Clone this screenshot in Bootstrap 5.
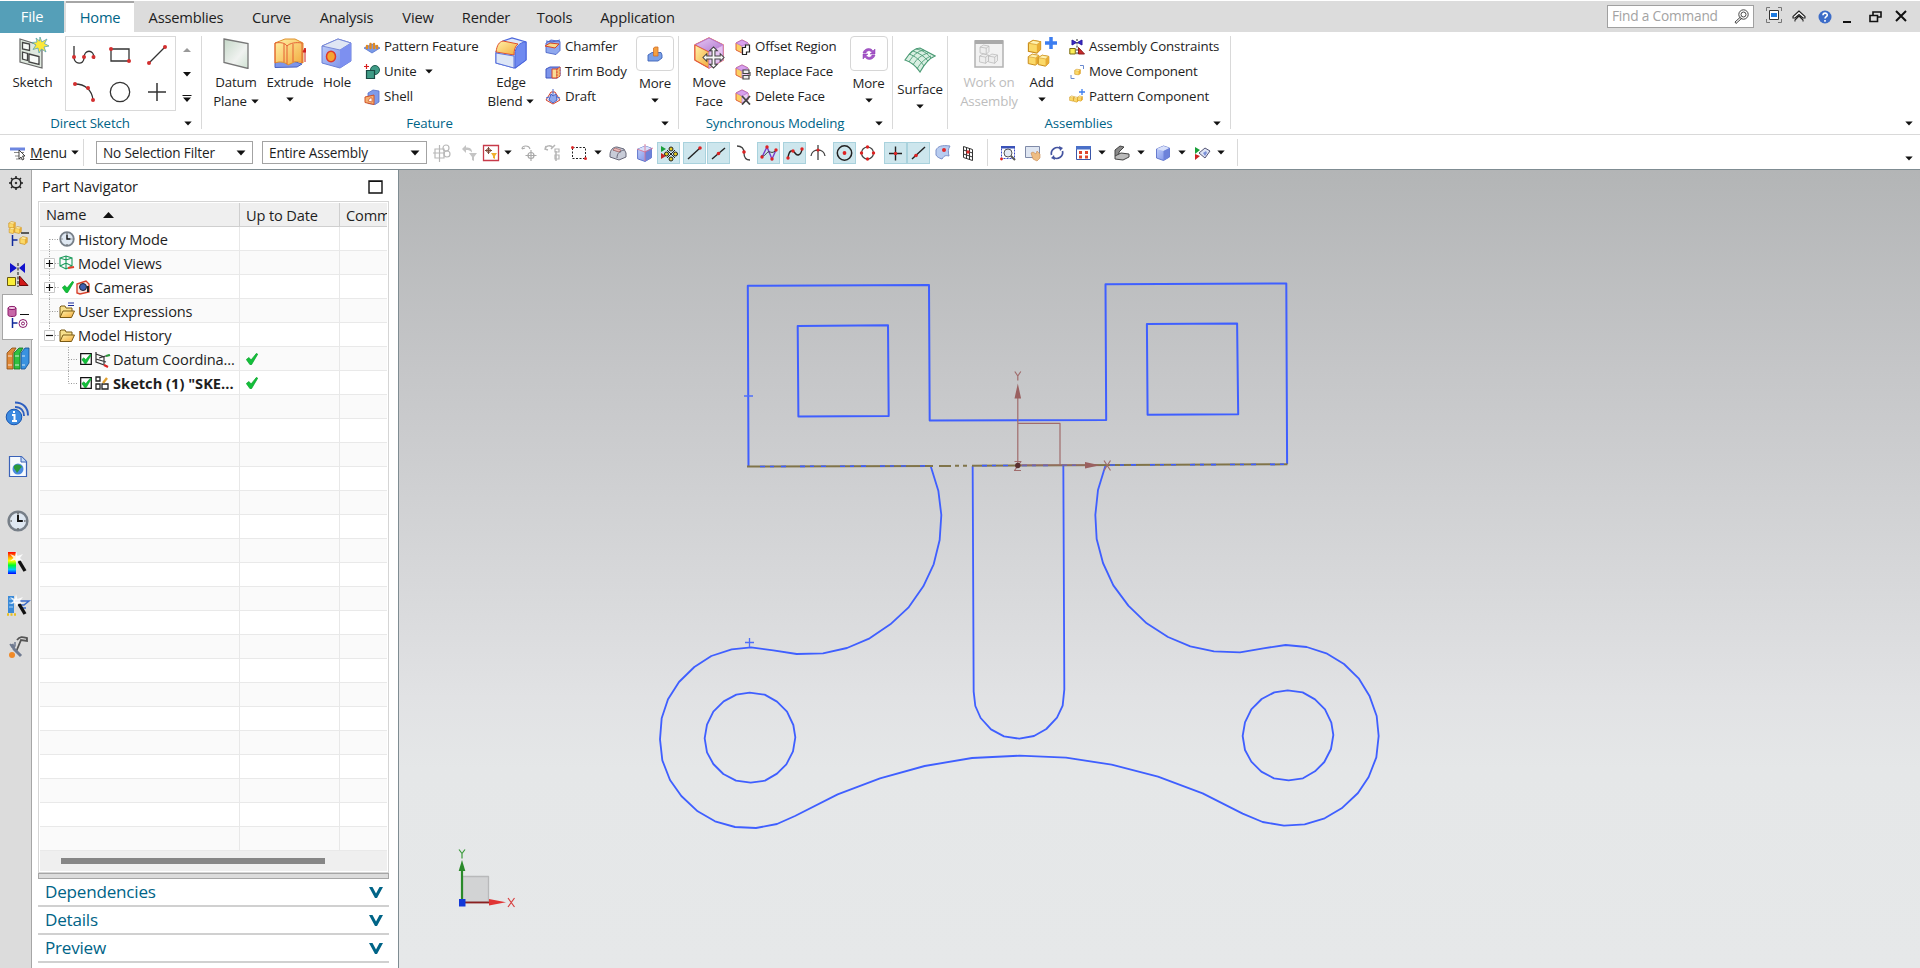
<!DOCTYPE html>
<html lang="en">
<head>
<meta charset="utf-8">
<title>Part Navigator</title>
<link rel="stylesheet" href="https://cdn.jsdelivr.net/npm/bootstrap@5.3.0/dist/css/bootstrap.min.css">
<style>
:root{--teal:#006487;--line:#d9d9d9;--edge:#7f8c92}
body{font-family:"Open Sans","Noto Sans",sans-serif;font-size:13.3px;letter-spacing:-.16px;color:#1e1e1e;height:968px;width:1920px;overflow:hidden;background:#fff;white-space:nowrap}
svg{display:block;flex:none;overflow:visible}
.tabbar{height:31px;margin-top:1px;background:#dcdcdc;font-size:14.7px;letter-spacing:-.2px}
.tabs{display:grid;grid-template-columns:64px 2px 68px 104px 67px 83px 60px 76px 61px 105px;height:31px;line-height:32px;text-align:center}
.tab-file{background:#559fb8;color:#fff;line-height:30px}
.tab-home{background:#fff;color:var(--teal);border-top:2px solid #a6a6a6;line-height:29px}
.find{width:147px;height:23px;border:1px solid #a0a0a0;background:#fff;color:#a3a3a3;font-size:13.7px}
.winbtns{display:grid;grid-template-columns:26px 26px 25px 26px 26px 16px;margin-left:12px;width:154px}
.ribbon{height:103px;border-bottom:1px solid var(--line)}
.grp{height:93px;margin-top:4px;border-right:1px solid var(--line)}
.grp-main{height:80px}
.cap{color:var(--teal);height:14px;line-height:16px}
.g1{width:202px}.g2{width:477px}.g3{width:214px}.g4{width:55px}.g5{width:283px}
.g1 .cap span{width:180px}.g2 .cap span{width:455px}.g3 .cap span{width:192px}.g5 .cap span{width:261px}
.cap span{text-align:center}
.g1 .grp-main{display:grid;grid-template-columns:65px 111px 22px}
.g2 .grp-main{display:grid;grid-template-columns:68px 40px 54px 121px 52px 96px 44px}
.g3 .grp-main{display:grid;grid-template-columns:56px 110px 47px}
.g5 .grp-main{display:grid;grid-template-columns:82px 23px 177px}
.big{display:flex;flex-direction:column;align-items:center;line-height:19px;padding-top:1px}
.big>svg:first-child{margin-bottom:4px}
.big .dn{margin-top:5px}
.smalls{display:grid;grid-auto-rows:25px;margin-top:-2px;align-content:start}
.smalls>div{display:flex;align-items:center;gap:4px}
.gallery{display:grid;grid-template-columns:35px 37px 37px;grid-template-rows:36px 37px;height:75px;border:1px solid var(--line);place-items:center}
.spin{padding-top:12px}
.morebox{width:38px;height:35px;border:1px solid #d6d6d6;border-radius:4px;margin:-1px 0 3px;display:grid;place-items:center}
.off{color:#bdbdbd}
.toolbar{height:35px;border-bottom:1px solid var(--edge)}
.menu{width:84px;border-right:1px solid var(--line);height:27px;margin-top:4px;font-size:14px;padding-left:10px}
.combo{height:23px;border:1px solid #a3a3a3;margin-top:6px;font-size:13.6px;padding:0 6px;line-height:24px}
.c1{width:157px;margin-left:12px}.c2{width:165px;margin-left:9px}
.tools{margin-left:3px;margin-top:4px;height:27px;display:grid;align-items:center;grid-template-columns:27px 22px 25px 13px 24px 26px 27px 12px 26px 25px 26px 24px 25px 25px 26px 23px 27px 23px 28px 23px 24px 25px 31px 9px 24px 25px 26px 27px 12px 27px 14px 27px 12px 27px 20px 1px}
.tools .on{background:#cde6ed;outline:1px solid #a9d2dd;outline-offset:-1px;width:23px;height:22px}
.vsep{width:1px;height:27px;background:var(--line)}
.endarrow{margin-right:7px}
.side{width:32px;background:#dcdcdc;border-right:1px solid #a6a6a6;display:grid;grid-template-rows:46px 42px 31px 54px 53px 54px 55px 41px 43px 41px 24px;padding:5px 0 0 2px;align-items:start;align-content:start;justify-items:center}
.side .cur{background:#fff;width:31px;height:46px;border:1px solid #a6a6a6;border-right:0;justify-self:start;display:grid;place-items:center}
.panel{width:367px;border-right:1px solid var(--edge);font-size:14.6px;letter-spacing:-.14px;padding-left:6px}
.ptitle{height:31px;padding:3px 15px 0 4px}
.tree{width:351px;height:672px;border:1px solid #d5d5d5;padding:1px}
.thead-row{display:grid;grid-template-columns:200px 100px 47px;height:24px;background:#efefef;border-bottom:1px solid #cfcfcf;line-height:25px}
.thead-row>div{padding-left:6px;border-right:1px solid #cfcfcf;overflow:hidden}
.thead-row>div:last-child{border-right:0}
.rows{height:624px;background:linear-gradient(90deg,transparent 199px,#e8e8e8 199px,#e8e8e8 200px,transparent 200px,transparent 299px,#e8e8e8 299px,#e8e8e8 300px,transparent 300px),repeating-linear-gradient(#fff 0 23px,#e9e9e9 23px 24px,#fafafa 24px 47px,#e9e9e9 47px 48px)}
.trow{display:grid;grid-template-columns:206px auto;height:24px;align-items:center;line-height:24px}
.trow>div{display:flex;align-items:center}
.trow span{margin-left:3px}
.cam{margin:0 2px 0 3px}
.kid{margin-left:3px}
.sk{letter-spacing:.02px}
.hscroll{height:20px;background:#efefef;padding:7px 0 0 21px}
.thumb{width:264px;height:6px;background:#868686}
.split{width:351px;height:6px;border:1px solid #a6a6a6;background:#dcdcdc}
.sec{width:351px;height:28px;border-bottom:2px solid #d0d0d0;color:var(--teal);font-size:17.1px;letter-spacing:-.22px;padding:0 6px 0 7px}
.view{background:linear-gradient(#b3b5b6 0,#c5c6c8 25%,#d6d7d9 50%,#e1e2e4 66%,#e5e7e8 75%,#e6e8e9 100%)}
</style>
</head>
<body class="d-flex flex-column">
<svg width="0" height="0" class="position-absolute">
<defs>
<linearGradient id="gy" x1="0" y1="0" x2="1" y2="1"><stop offset="0" stop-color="#fff3a8"/><stop offset="1" stop-color="#f2a93c"/></linearGradient>
<linearGradient id="gb" x1="0" y1="0" x2="1" y2="1"><stop offset="0" stop-color="#c5d3fa"/><stop offset="1" stop-color="#7288e6"/></linearGradient>
<linearGradient id="gp" x1="0" y1="0" x2="1" y2="1"><stop offset="0" stop-color="#e8c8f4"/><stop offset="1" stop-color="#b078d0"/></linearGradient>
<linearGradient id="gg" x1="0" y1="0" x2="1" y2="1"><stop offset="0" stop-color="#c5d8c8"/><stop offset=".6" stop-color="#f0f2f0"/><stop offset="1" stop-color="#cfe2d2"/></linearGradient>
<linearGradient id="rain" x1="0" y1="0" x2="0" y2="1"><stop offset="0" stop-color="#f00"/><stop offset=".25" stop-color="#fa0"/><stop offset=".4" stop-color="#ff0"/><stop offset=".6" stop-color="#0f2"/><stop offset=".8" stop-color="#0cf"/><stop offset="1" stop-color="#00f"/></linearGradient>
<symbol id="dn" viewBox="0 0 8 5"><path d="M.3.5h7.4L4 4.6z" fill="#111"/></symbol>
<symbol id="sketch" viewBox="0 0 32 32"><path d="M3 2l22 7v22L3 25z" fill="#dfe9df" stroke="#666" stroke-width="1.2"/><path d="M5.500 5.500l7 1.500v6.500l-7-1.500zM5.500 15l5 1.500v7l-5-1.500zM12 17l10 2.500v8L12 25z" fill="#f7faf7" stroke="#444" stroke-width="1.300"/><path d="M23 0l1.800 5L30 2l-2.500 4.500L32 9l-5 1 2 5-4.500-3L22 16l-1-5-5 1.500 3-4.500-4-2.500 5-.5-1-4 3.500 3z" fill="#fce83a" stroke="#59a5b5" stroke-width=".8"/></symbol>
<symbol id="datum" viewBox="0 0 32 32"><path d="M4 2l24 4.500v25L4 25.500z" fill="url(#gg)" stroke="#777" stroke-width="1.300"/></symbol>
<symbol id="extr" viewBox="0 0 32 32"><path d="M1 26c6-3 9-1 12 1l6-3 9 3-5 3-22 .5z" fill="#7d95ea" stroke="#4a63c0"/><path d="M1 6l10-4h10l8 4v20c-4-1-6-2-9-1l-6 3c-3-3-8-4-13-2z" fill="url(#gy)" stroke="#e0902c"/><path d="M1 6c6-1 10 0 12 3 3-3 9-4 15-3M13 9v18M10 7v18M19 7v18M1 6v20M28 6v20" fill="none" stroke="#e2542c" stroke-width=".9"/><path d="M31 25V13m-2 2l2-4 2 4z" stroke="#d02020" fill="#d02020"/></symbol>
<symbol id="hole" viewBox="0 0 32 32"><path d="M1 9l16-7 13 4v18l-11 7-18-5z" fill="url(#gb)" stroke="#6b80d8"/><path d="M1 9l18 4 11-7L17 2z" fill="#e0e6f4" stroke="#7a8ad8"/><path d="M19 13v18l11-7V6z" fill="#7d90f0"/><ellipse cx="10" cy="19.500" rx="4.500" ry="5.300" fill="#f5a533" stroke="#e0392b" stroke-width="1.500"/></symbol>
<symbol id="edge" viewBox="0 0 32 32"><path d="M1 15v11l19 5 11-8V5L17 1 8 4z" fill="#dde6f6" stroke="#4b66dc" stroke-width="1.200"/><path d="M20 17v14l11-8V5c-6 0-11 5-11 12z" fill="#6f8af0" stroke="#4b66dc"/><path d="M1 15C2 8 4 5 8 4l15 3c-3 2-4 6-4 11z" fill="url(#gy)" stroke="#e0502c"/><path d="M1 16v10l18 5V19z" fill="#dde6f6" stroke="#5b74dc"/></symbol>
<symbol id="hexf" viewBox="0 0 32 32"><path d="M2 8l14-7 14 7v15l-14 8L2 23z" fill="#fff" stroke="#e45a3a" stroke-width="1.500"/><path d="M2 8l14-7 14 7-14 7z" fill="url(#gp)" stroke="#b878d0"/><path d="M2 8l14 7v16L2 23z" fill="url(#gy)" stroke="#e45a3a"/><path d="M16 15l14-7v15l-14 8z" fill="#e6c4f2" stroke="#c48ada"/></symbol>
<symbol id="arr4" viewBox="0 0 24 24"><path d="M12 1l4 4h-2.500v5.500H19V8l4 4-4 4v-2.500h-5.500V19H16l-4 4-4-4h2.500v-5.500H5V16l-4-4 4-4v2.500h5.500V5H8z" fill="#f6f6f6" stroke="#444" stroke-width="1.100"/></symbol>
<symbol id="surf" viewBox="0 0 32 32"><path d="M1 16C6 8 11 4 16 4l15 8c-5 2-10 7-15 16C12 22 7 18 1 16z" fill="#d9efe2" stroke="#4a9a74" stroke-width="1.200"/><path d="M5 10c6 2 11 6 15 12M9 7c6 2 11 5 15 10M12 5c6 1 11 4 15 9M5 18c4-7 9-11 15-12M9 21c4-7 9-10 15-12M13 25c4-7 9-11 14-13" fill="none" stroke="#4a9a74" stroke-width=".9"/></symbol>
<symbol id="cube" viewBox="0 0 16 16"><path d="M1.500 4l7-3 6 2v9l-6 3.500-7-2.500z" fill="url(#gb)" stroke="#5a70c8" stroke-width=".9"/><path d="M1.500 4l7 2 6-3-6-2z" fill="#d8e0fa"/><path d="M8.500 6v9.500l6-3.500V3z" fill="#6d82da"/></symbol>
<symbol id="ycube" viewBox="0 0 16 16"><path d="M1.500 4.500l5-3 8 1.500v8l-4 4-9-2z" fill="#fbd968" stroke="#c88a18" stroke-width="1.200"/><path d="M1.500 4.500l5-3 8 1.500-4 3z" fill="#fff2b0" stroke="#d49a28" stroke-width=".8"/><path d="M10.500 6v9l4-4V3z" fill="#e8ac34"/></symbol>
<symbol id="wcube" viewBox="0 0 16 16"><path d="M1.500 4.500l5-3 8 1.500v8l-4 4-9-2z" fill="#eee" stroke="#b5b5b5"/><path d="M1.500 4.500l9 1.500 4-3M10.500 6v9" fill="none" stroke="#b5b5b5"/></symbol>
<symbol id="work" viewBox="0 0 32 32"><path d="M2 4h28v26H2z" fill="#f2f2f2" stroke="#b2b2b2" stroke-width="1.500"/><path d="M2 3h28v4H2z" fill="#aaa"/><use href="#wcube" x="5" y="7" width="13" height="11"/><use href="#wcube" x="5" y="16" width="12" height="11"/><use href="#wcube" x="14" y="16" width="12" height="11"/></symbol>
<symbol id="add" viewBox="0 0 32 32"><use href="#ycube" x="1" y="2" width="15" height="15"/><use href="#ycube" x="1" y="16" width="13" height="13"/><use href="#ycube" x="11" y="17" width="13" height="13"/><path d="M25 0v12m-6-6h12" stroke="#3c7df0" stroke-width="3.500"/></symbol>
<symbol id="patf" viewBox="0 0 16 16"><path d="M0 9l8-4 8 4-8 5z" fill="#7a9ae8" stroke="#4a6ac8" stroke-width=".7"/><path d="M3 7v2M6.500 5v4M10 5v4M13 7v2" stroke="#e08a22" stroke-width="2.400" stroke-linecap="round"/></symbol>
<symbol id="unite" viewBox="0 0 16 16"><circle cx="11" cy="6" r="4.500" fill="#3f9b86" stroke="#1f5c50"/><path d="M2.500 6.500h8v8h-8z" fill="#3f9b86" stroke="#1a4a44" stroke-width="1.200"/><path d="M2.500 0v5M0 2.500h5" stroke="#d81e1e" stroke-width="1.200"/></symbol>
<symbol id="shell" viewBox="0 0 16 16"><path d="M4 4l5-3 6 1v11l-4 2.500-7-1z" fill="#7f9bea" stroke="#5870c8" stroke-width=".8"/><path d="M1 8l9-2v9.500l-9-2z" fill="#f5b070" stroke="#d0522a"/><path d="M4 12l2-3h2v4z" fill="#fff" stroke="#d0522a" stroke-width=".7"/></symbol>
<symbol id="cham" viewBox="0 0 16 16"><path d="M1 4l5-3 9 1.500v9l-4 4-10-2z" fill="#8fa8ee" stroke="#4a64c8" stroke-width=".9"/><path d="M0 7l5-3 9 1-4 4z" fill="#f7d98a" stroke="#d8452a"/><path d="M1 2l6 1 8-2" stroke="#4a64c8" fill="none"/></symbol>
<symbol id="trim" viewBox="0 0 16 16"><path d="M1 5l4-2h10v9l-3 2H1z" fill="#7c94ea" stroke="#4056c0"/><path d="M7 5h5v9H7z" fill="#f8dc98" stroke="#d8452a"/><path d="M12 5l3-2v9l-3 2z" fill="#f4c070" stroke="#d8452a" stroke-dasharray="2 1"/></symbol>
<symbol id="draft" viewBox="0 0 16 16"><path d="M6 3h4l5 8-7 4-7-4z" fill="#dfe5fa" stroke="#d8452a"/><path d="M6 5l2 2 3-2 1 6-4 3-4-3z" fill="#8fa8ee" stroke="#4a64c8"/><path d="M8 0v6M1 9l3-1m11 1l-3-1" stroke="#4a64c8"/></symbol>
<symbol id="more1" viewBox="0 0 16 16"><path d="M1 9l4-2.500h9L15 9v3l-4 3H1z" fill="#7ba0e6" stroke="#3c62b8" stroke-width=".9"/><path d="M6.500 2l1.500-1h3v9H6.500z" fill="#f5a040" stroke="#d0702a" stroke-width=".8"/></symbol>
<symbol id="more2" viewBox="0 0 16 16"><path d="M2 7c1-5 8-6 10-2l2-2v5H9l2-1.500C9 4 6 4 5 7zM14 9c-1 5-8 6-10 2l-2 2V8h5L5 9.500C7 12 10 12 11 9z" fill="#a556c8" stroke="#8a3ab0" stroke-width=".5"/></symbol>
<symbol id="mini" viewBox="0 0 16 16"><path d="M1 4l6-3 6 3v7l-6 3-6-3z" fill="#fbd062" stroke="#e0603a"/><path d="M1 4l6-3 6 3-6 3z" fill="#d8a0ec" stroke="#b070d0" stroke-width=".8"/><path d="M7 7l6-3v7l-6 3z" fill="#ead0f4" stroke="#c080d8" stroke-width=".7"/></symbol>
<symbol id="off" viewBox="0 0 16 16"><use href="#mini"/><path d="M7.500 8.500h3V6h4v7h-3v2.500h-4z" fill="#fff" stroke="#222" stroke-width="1.200"/></symbol>
<symbol id="rep" viewBox="0 0 16 16"><use href="#mini"/><path d="M8 6h6v3.500H8zM8 11.500h6V15H8z" fill="#eee" stroke="#444" stroke-width="1.200"/><path d="M15 8v4" stroke="#333"/></symbol>
<symbol id="del" viewBox="0 0 16 16"><use href="#mini"/><path d="M7 7l8 8.500m0-8.500l-8 8.500" stroke="#444" stroke-width="1.800"/></symbol>
<symbol id="cons" viewBox="0 0 16 16"><path d="M3 1l4.500 2.500L3 6zM13 1L8.500 3.500 13 6z" fill="#3a2ac8" stroke="#2a1aa0"/><path d="M8 0v16" stroke="#222" stroke-dasharray="2 1.300"/><path d="M.8 9.500h5.500V15H.8z" fill="#fbee58" stroke="#7a6a10"/><path d="M9.500 8.500V15h6z" fill="#cc2a2a" stroke="#8a1a1a"/></symbol>
<symbol id="movc" viewBox="0 0 16 16"><use href="#ycube" x="5" y="4.500" width="7" height="7"/><path d="M11 1.500h3.500V5M2 11v3.500h3.500" fill="none" stroke="#6a8ad0"/></symbol>
<symbol id="patc" viewBox="0 0 16 16"><use href="#ycube" x="0" y="6" width="6" height="7"/><use href="#ycube" x="4" y="7" width="6" height="7"/><use href="#ycube" x="8" y="6" width="6" height="7"/><path d="M13 0v6m-3-3h6" stroke="#3c7df0" stroke-width="1.300"/></symbol>
<symbol id="fold" viewBox="0 0 16 16"><path d="M1 14V4l1-1h4l1 2h6v3" fill="#f7e08c" stroke="#7a5a14"/><path d="M1 14.500L4 8h11.500l-3 6.500z" fill="url(#gy)" stroke="#7a5a14"/></symbol>
<symbol id="clk" viewBox="0 0 16 16"><circle cx="8" cy="8" r="6.800" fill="#dfe8f2" stroke="#777f88" stroke-width="1.800"/><path d="M8 3.500V8h3.500" fill="none" stroke="#111" stroke-width="1.400"/><path d="M8 2v1M8 13v1M2.500 8h1M12.500 8h1" stroke="#555"/></symbol>
<symbol id="tick" viewBox="0 0 12 12"><path d="M.3 6.500L3 4.500l2 2.500L10.500.3l1.200.9L5.500 11.700H4z" fill="#12c03a" stroke="#0aa02a" stroke-width=".7"/></symbol>
<symbol id="box" viewBox="0 0 12 12"><path d="M.7.700h10.600v10.600H.7z" fill="#fff" stroke="#111" stroke-width="1.200"/><use href="#tick" x="1.500" y="1" width="10" height="10"/></symbol>
<symbol id="wand" viewBox="0 0 24 24"><path d="M13 10l6 10" stroke="#111" stroke-width="3.400"/><path d="M10 0l1.500 5L17 3l-3 4 3 3-5-1-1 4-2-4-5 1 3.500-3L4 3l5 2z" fill="#fff" opacity=".85"/></symbol>
</defs></svg>

<header class="tabbar d-flex">
<nav class="tabs"><div class="tab-file">File</div><i></i><div class="tab-home">Home</div><div>Assemblies</div><div>Curve</div><div>Analysis</div><div>View</div><div>Render</div><div>Tools</div><div>Application</div></nav>
<div class="find d-flex justify-content-between align-items-center ms-auto mt-1 ps-1 pe-1"><span>Find a Command</span>
<svg width="15" height="15" fill="none" stroke="#444"><circle cx="9.500" cy="5.500" r="4.700"/><circle cx="9.500" cy="5.500" r="2.500"/><path d="M6.500 8L1 13l1 1.500 6-5.500"/></svg></div>
<div class="winbtns align-items-center">
<svg width="16" height="16" class="mb-1"><path d="M.5 4V.5H4M12 .5h3.500V4M.5 12v3.500H4M12 15.500h3.500V12" fill="none" stroke="#777"/><path d="M3.500 3.500h9v9h-9z" fill="#fff" stroke="#333"/><path d="M5 6h6v4H5z" fill="#1c7ae0"/></svg>
<svg width="14" height="13" fill="none" stroke="#222" stroke-width="1.100"><path d="M7 1L1 6.500V8h2l4-3.500L11 8h2V6.500zM7 6L3 10v1.500M7 6l4 4v1.500" fill="#fff"/></svg>
<svg width="14" height="14"><circle cx="7" cy="7" r="6.500" fill="#3c6cc8"/><path d="M5 5.300c0-3 4.300-2.800 4.300-.3C9.300 6.700 7 6.500 7 8.500M7 10v1.700" stroke="#fff" stroke-width="1.600" fill="none"/></svg>
<svg width="9" height="14"><path d="M0 12h8" stroke="#111" stroke-width="2"/></svg>
<svg width="13" height="12" fill="none" stroke="#111" stroke-width="1.600"><path d="M4 4V1h8v5H8M1 4.500h7.500v6H1z"/></svg>
<svg width="12" height="12" stroke="#111" stroke-width="2"><path d="M1 0l10 10M11 0L1 10"/></svg>
</div>
</header>

<section class="ribbon d-flex">
<div class="grp g1">
 <div class="grp-main">
  <div class="big"><svg width="32" height="32"><use href="#sketch"/></svg>Sketch</div>
  <div class="gallery">
   <svg width="22" height="20" fill="none" stroke="#333" stroke-width="1.300"><path d="M1 1v11c0 8 10 8 10 1 0-9 10-9 10 0v1"/><g fill="#d32f2f" stroke="none"><circle cx="1" cy="12" r="2"/><circle cx="11" cy="12" r="2"/><circle cx="20.500" cy="12" r="2"/></g></svg>
   <svg width="22" height="18"><path d="M2 3h18v12H2z" fill="none" stroke="#333" stroke-width="1.300"/><circle cx="2" cy="3" r="2" fill="#d32f2f"/><circle cx="20" cy="15" r="2" fill="#d32f2f"/></svg>
   <svg width="20" height="20"><path d="M2 18L18 2" stroke="#333" stroke-width="1.300"/><circle cx="2" cy="18" r="2" fill="#d32f2f"/><circle cx="18" cy="2" r="2" fill="#d32f2f"/></svg>
   <svg width="22" height="20"><path d="M2 2c10 0 17 6 18 16" fill="none" stroke="#333" stroke-width="1.300"/><g fill="#d32f2f"><circle cx="2" cy="2" r="2"/><circle cx="15" cy="6" r="2"/><circle cx="20" cy="18" r="2"/></g></svg>
   <svg width="22" height="22"><circle cx="11" cy="11" r="9.700" fill="none" stroke="#333" stroke-width="1.300"/></svg>
   <svg width="18" height="18"><path d="M9 0v18M0 9h18" stroke="#333" stroke-width="1.500"/></svg>
  </div>
  <div class="spin d-flex flex-column align-items-center">
   <svg width="8" height="58"><path d="M0 4h8L4 0z" fill="#999"/><path d="M0 24h8l-4 4.500zM0 49.500h8l-4 4.500z" fill="#111"/><path d="M-.5 47.500h9" stroke="#111"/></svg>
  </div>
 </div>
 <div class="cap d-flex align-items-center"><span>Direct Sketch</span><svg width="8" height="5" class="ms-1"><use href="#dn"/></svg></div>
</div>

<div class="grp g2">
 <div class="grp-main">
  <div class="big"><svg width="32" height="32"><use href="#datum"/></svg>Datum<div class="d-flex align-items-center gap-1">Plane<svg width="8" height="5"><use href="#dn"/></svg></div></div>
  <div class="big"><svg width="32" height="32"><use href="#extr"/></svg>Extrude<svg width="8" height="5" class="dn"><use href="#dn"/></svg></div>
  <div class="big"><svg width="32" height="32"><use href="#hole"/></svg>Hole</div>
  <div class="smalls"><div><svg width="16" height="16"><use href="#patf"/></svg>Pattern Feature</div><div><svg width="16" height="16"><use href="#unite"/></svg>Unite<svg width="8" height="5" class="ms-1"><use href="#dn"/></svg></div><div><svg width="16" height="16"><use href="#shell"/></svg>Shell</div></div>
  <div class="big"><svg width="32" height="32"><use href="#edge"/></svg>Edge<div class="d-flex align-items-center gap-1">Blend<svg width="8" height="5"><use href="#dn"/></svg></div></div>
  <div class="smalls ps-1 ms-1"><div><svg width="16" height="16"><use href="#cham"/></svg>Chamfer</div><div><svg width="16" height="16"><use href="#trim"/></svg>Trim Body</div><div><svg width="16" height="16"><use href="#draft"/></svg>Draft</div></div>
  <div class="big"><div class="morebox"><svg width="16" height="16"><use href="#more1"/></svg></div>More<svg width="8" height="5" class="dn"><use href="#dn"/></svg></div>
 </div>
 <div class="cap d-flex align-items-center"><span>Feature</span><svg width="8" height="5" class="ms-1"><use href="#dn"/></svg></div>
</div>

<div class="grp g3">
 <div class="grp-main">
  <div class="big ps-1"><svg width="32" height="32"><use href="#hexf"/><use href="#arr4" x="9" y="9" width="23" height="23"/></svg>Move<div>Face</div></div>
  <div class="smalls"><div><svg width="16" height="16"><use href="#off"/></svg>Offset Region</div><div><svg width="16" height="16"><use href="#rep"/></svg>Replace Face</div><div><svg width="16" height="16"><use href="#del"/></svg>Delete Face</div></div>
  <div class="big"><div class="morebox"><svg width="16" height="16"><use href="#more2"/></svg></div>More<svg width="8" height="5" class="dn"><use href="#dn"/></svg></div>
 </div>
 <div class="cap d-flex align-items-center"><span>Synchronous Modeling</span><svg width="8" height="5" class="ms-1"><use href="#dn"/></svg></div>
</div>

<div class="grp g4"><div class="big pt-2"><svg width="32" height="32"><use href="#surf"/></svg>Surface<svg width="8" height="5" class="dn"><use href="#dn"/></svg></div></div>

<div class="grp g5">
 <div class="grp-main">
  <div class="big off"><svg width="32" height="32"><use href="#work"/></svg>Work on<div>Assembly</div></div>
  <div class="big"><svg width="32" height="32"><use href="#add"/></svg>Add<svg width="8" height="5" class="dn"><use href="#dn"/></svg></div>
  <div class="smalls ps-3"><div><svg width="16" height="16"><use href="#cons"/></svg>Assembly Constraints</div><div><svg width="16" height="16"><use href="#movc"/></svg>Move Component</div><div><svg width="16" height="16"><use href="#patc"/></svg>Pattern Component</div></div>
 </div>
 <div class="cap d-flex align-items-center"><span>Assemblies</span><svg width="8" height="5" class="ms-1"><use href="#dn"/></svg></div>
</div>
<svg width="8" height="5" class="endarrow ms-auto align-self-end mb-2"><use href="#dn"/></svg>
</section>

<section class="toolbar d-flex">
<div class="menu d-flex align-items-center"><svg width="16" height="16" class="me-1"><path d="M3 3.500h12M4 7.500h10M5 11h9M6 14h7" stroke="#888"/><path d="M0 2.500h15v3H0z" fill="#6d86e0"/><path d="M9 5v9l2-2 1.500 3 1.500-1-1.500-3H15z" fill="#fff" stroke="#333" stroke-width=".9"/></svg><span><u>M</u>enu</span><svg width="8" height="5" class="ms-1"><use href="#dn"/></svg></div>
<div class="combo c1 d-flex align-items-center justify-content-between">No Selection Filter<svg width="10" height="6"><use href="#dn"/></svg></div>
<div class="combo c2 d-flex align-items-center justify-content-between">Entire Assembly<svg width="10" height="6"><use href="#dn"/></svg></div>
<div class="tools">
<svg width="24" height="24" fill="none" stroke="#b8b8b8" stroke-width="1.200"><path d="M5 8h9v9H5zM9.500 4v17M3 12h12"/><circle cx="16" cy="7" r="3"/><circle cx="17" cy="13" r="3"/></svg>
<svg width="24" height="24" fill="#c4c4c4"><path d="M5 8l4-4v2.500c4 0 6 1 6 5-2-2-3-2.500-6-2.500V12zM12 12h8l-3 4v4l-2-1v-3z"/></svg>
<svg width="24" height="24" fill="none"><path d="M4.500 4.500h15v15h-15z" stroke="#c83a4a" stroke-width="1.300"/><path d="M9.500 6v7M6 9.500h7" stroke="#7a4a3a"/><circle cx="9.500" cy="9.500" r="2" stroke="#7a4a3a"/><path d="M12 12h6l-2 3v3l-2-1v-2z" fill="#f0b030"/></svg>
<svg width="8" height="5"><use href="#dn"/></svg>
<svg width="24" height="24" fill="none" stroke="#aaa" stroke-width="1.200"><path d="M5 8c0-4 7-4 8 0M5 8l3-1M14 9v11M8.500 14.500h11"/><circle cx="14" cy="14.500" r="3"/></svg>
<svg width="24" height="24" fill="none" stroke="#b5b5b5" stroke-width="1.500"><path d="M4 8c1-4 6-4 8-1M5 5l-1 3 3 1M10 8l4-4M15 10v10"/><path d="M14 8h4v3h-4zM14 14h4v4h-4z" stroke-width="1.200"/></svg>
<svg width="24" height="24" fill="none"><path d="M5.500 6.500h13v11h-13z" stroke="#222" stroke-dasharray="2 1.500"/><circle cx="5.500" cy="6.500" r="1.500" fill="#e02a2a"/><circle cx="18.500" cy="17.500" r="1.500" fill="#e02a2a"/></svg>
<svg width="8" height="5"><use href="#dn"/></svg>
<svg width="24" height="24" stroke="#667" stroke-width="1"><path d="M4 14c0-5 3-8 7-8l7 2 2 4v4l-7 3-9-3z" fill="#c8ccd8"/><path d="M11 17c0-5 3-7 7-8M7 9l8 2" fill="none"/><path d="M9 7l6 2-2 2-6-2z" fill="#e8b8b8" stroke="#a66" stroke-width=".7"/></svg>
<svg width="24" height="24"><use href="#cube" x="4" y="4" width="17" height="17"/><path d="M13 3v17M5 8l8 3 8-4" fill="none" stroke="#e0708a" stroke-width=".8"/></svg>
<svg class="on" viewBox="0 0 23 22"><path d="M4 4l5 3-5 3z" fill="#1aa03a"/><path d="M4 11l5 3-5 3z" fill="#c22"/><g fill="#e8cc20" stroke="#222"><circle cx="14" cy="7" r="2"/><circle cx="14" cy="17" r="2"/><circle cx="9.500" cy="12" r="2"/><circle cx="18.500" cy="12" r="2"/></g><path d="M10 8l8 8m0-8l-8 8" stroke="#222"/></svg>
<svg class="on" viewBox="0 0 23 22"><path d="M5 17L17 6" stroke="#222" stroke-width="1.400"/><circle cx="17" cy="6" r="1.800" fill="#d22"/></svg>
<svg class="on" viewBox="0 0 23 22"><path d="M5 17L18 6" stroke="#222" stroke-width="1.400"/><circle cx="11.500" cy="11.500" r="1.800" fill="#d22"/></svg>
<svg width="24" height="24"><path d="M5 5c5 0 7 2 7 7s2 7 6 7" fill="none" stroke="#444" stroke-width="1.300"/><circle cx="12" cy="11" r="1.800" fill="#d22"/></svg>
<svg class="on" viewBox="0 0 23 22" fill="none"><path d="M5 15L10 5l5 12 4-9" stroke="#7a3ac8" stroke-width="1.400"/><path d="M4 14c4 1 5-3 7-4s4 2 7-1" stroke="#333"/><g fill="#d22"><circle cx="5" cy="15" r="1.700"/><circle cx="10" cy="5" r="1.700"/><circle cx="15" cy="17" r="1.700"/><circle cx="19" cy="8" r="1.700"/></g></svg>
<svg class="on" viewBox="0 0 23 22"><path d="M5 16c1-9 5-8 7-5s6 3 7-4" fill="none" stroke="#222" stroke-width="1.400"/><g fill="#d22"><circle cx="5" cy="16" r="1.700"/><circle cx="10" cy="9" r="1.700"/><circle cx="19" cy="7" r="1.700"/></g></svg>
<svg width="24" height="24" fill="none" stroke="#444" stroke-width="1.300"><path d="M12 4v15M5 15c1-8 13-8 14 0"/><circle cx="12" cy="9" r="1.500" fill="#d22" stroke="none"/></svg>
<svg class="on" viewBox="0 0 23 22"><circle cx="11.500" cy="11" r="7.200" fill="none" stroke="#222" stroke-width="1.500"/><circle cx="11.500" cy="11" r="1.900" fill="#d22"/></svg>
<svg width="24" height="24"><circle cx="11.500" cy="12" r="6" fill="none" stroke="#444" stroke-width="1.200"/><g fill="#d22"><circle cx="11.500" cy="6" r="1.700"/><circle cx="11.500" cy="18" r="1.700"/><circle cx="5.500" cy="12" r="1.700"/><circle cx="17.500" cy="12" r="1.700"/></g></svg>
<svg class="on" viewBox="0 0 23 22"><path d="M11.500 4.500v14M5 11.500h13" stroke="#222" stroke-width="1.400"/><circle cx="11.500" cy="11.500" r="1.700" fill="#d22"/></svg>
<svg class="on" viewBox="0 0 23 22"><path d="M5 17L18 5" stroke="#222" stroke-width="1.400"/><circle cx="9" cy="13.500" r="1.800" fill="#d22"/></svg>
<svg width="24" height="24"><path d="M5 9c2-4 6-5 14-4-2 3-2 6-1 10-4-1-5 0-7 3-3-1-5-2-6-4z" fill="#b8ccf0" stroke="#7a90c8"/><circle cx="13" cy="9" r="2" fill="#e02a2a"/></svg>
<svg width="24" height="24" fill="none" stroke="#333"><path d="M7.500 5.500l9 3v11l-9-3zM10.500 6.500v11M13.500 7.500v11M7.500 9l9 3M7.500 13l9 3"/><circle cx="12" cy="11" r="1.700" fill="#e02a2a" stroke="none"/></svg>
<i class="vsep"></i>
<svg width="24" height="24" fill="none"><path d="M5.500 6.500h13v11h-13z" stroke="#3a4ac8" stroke-dasharray="2 1"/><path d="M5 5h14v2.500H5z" fill="#3a52b8"/><circle cx="12" cy="12" r="4" fill="#e4eaf4" stroke="#555"/><path d="M15 15l4 4" stroke="#555" stroke-width="2"/><circle cx="5.500" cy="18" r="1.400" fill="#d22"/></svg>
<svg width="24" height="24"><path d="M5.500 5.500h14v11h-14z" fill="#dfe6f2" stroke="#7f8aa8"/><path d="M11 12l2-1 3 2 1-3 3 3v4l-3 3-4-2z" fill="#eebd84" stroke="#c88a50" stroke-width=".6"/></svg>
<svg width="24" height="24" fill="none" stroke="#4454a0" stroke-width="1.700"><path d="M6.500 14a6 6 0 0 1 9-6.500M17.500 10a6 6 0 0 1-9 6.500"/><path d="M14 5l4 2-3 3zM10 19l-4-2 3-3z" fill="#4454a0" stroke="none"/></svg>
<svg width="24" height="24"><path d="M5.500 5.500h14v13h-14z" fill="#fff" stroke="#3a56a8"/><path d="M5 5h15v3.500H5z" fill="#4a70c8"/><path d="M8 10h3v3H8zM14 10h3v3h-3zM8 14.500h3v3H8zM14 14.500h3v3h-3z" fill="#e0452a"/></svg>
<svg width="8" height="5"><use href="#dn"/></svg>
<svg width="24" height="24" stroke="#444"><path d="M5 15V9l5-4 4 1-5 5v5z" fill="#888"/><path d="M5 15l6-3 8 1v3l-6 3-8-1z" fill="#bbb"/></svg>
<svg width="8" height="5"><use href="#dn"/></svg>
<svg width="24" height="24"><use href="#cube" x="4" y="4" width="16" height="16"/></svg>
<svg width="8" height="5"><use href="#dn"/></svg>
<svg width="24" height="24"><path d="M5 6l5 3-5 4z" fill="#1aa03a"/><path d="M5 13l5 2-5 4z" fill="#c22"/><path d="M9 12l6-5 5 3-5 7z" fill="#dde4f5" stroke="#557"/><path d="M13 12l3-2 1 2-2 3z" fill="#7a90d8"/></svg>
<svg width="8" height="5"><use href="#dn"/></svg>
<i class="vsep"></i>
</div>
<svg width="8" height="5" class="endarrow ms-auto align-self-end mb-2"><use href="#dn"/></svg>
</section>

<main class="d-flex flex-grow-1">
<aside class="side">
<svg width="18" height="16" fill="none" stroke="#222"><circle cx="7" cy="8" r="4.800" stroke-width="1.500"/><circle cx="7" cy="8" r=".8" fill="#222"/><path d="M7 1v2M7 13v2M0 8h2M12 8h2M2 3l1.500 1.500M10.500 11.500L12 13M12 3l-1.500 1.500M3.500 11.500L2 13" stroke-width="1.500"/></svg>
<svg width="24" height="24"><use href="#ycube" x="2" y="0" width="8" height="8"/><use href="#ycube" x="2" y="6" width="8" height="7"/><use href="#ycube" x="8" y="5" width="8" height="8"/><path d="M6.500 14v11M6.500 19h5" stroke="#112a9a" stroke-width="1.500"/><path d="M15 12h8" stroke="#111" stroke-width="1.300"/><use href="#ycube" x="13" y="15" width="9" height="9"/></svg>
<svg width="24" height="24"><path d="M4 0l7 5-7 5zM19 0l-6 5 6 5z" fill="#1212cc"/><path d="M12 0v24" stroke="#111" stroke-dasharray="3 1.500"/><path d="M1.500 14.500h8v8h-8z" fill="#fbee38" stroke="#6a5a10"/><path d="M13.500 13v9.500H22z" fill="#d01818" stroke="#6a0a0a"/></svg>
<div class="cur"><svg width="24" height="24"><path d="M2 3v7c0 2 8 2 8 0V3" fill="#c868a8" stroke="#8a1a6a"/><ellipse cx="6" cy="3" rx="4" ry="1.600" fill="#f4c8e4" stroke="#8a1a6a"/><path d="M6.500 13v10M6.500 18h5" stroke="#112a9a" stroke-width="1.500"/><path d="M14 9.500h9" stroke="#111"/><circle cx="17" cy="18.500" r="4" fill="none" stroke="#8a1a6a"/><circle cx="17" cy="18.500" r="1.500" fill="none" stroke="#8a1a6a"/></svg></div>
<svg width="24" height="22" stroke-width=".8"><path d="M1 5l5-5h4L7 5v16H1z" fill="#e08a3a" stroke="#8a4a10"/><path d="M8 5l5-5h4l-3 5v16H8z" fill="#30c040" stroke="#107020"/><path d="M15 5l4-5h4v15l-4 6h-4z" fill="#3a92e0" stroke="#104a90"/><path d="M2 8h4M9 8h4M16 8h3M2 17h4M9 17h4M16 17h3" stroke="#fff"/></svg>
<svg width="24" height="24"><circle cx="8" cy="16" r="7.800" fill="#3c8ae0" stroke="#1a56b0"/><path d="M8 10v2M6 14h2.500v6M6 20h5" stroke="#fff" stroke-width="2" fill="none"/><path d="M9 6c6 0 9 4 9 9M9 1.500c8 0 13 5 13 13" stroke="#2d5fc0" stroke-width="2" fill="none"/></svg>
<svg width="20" height="24"><path d="M1.500 1.500h12l5 5v15h-17z" fill="#f6fafe" stroke="#3a62b8" stroke-width="1.200"/><path d="M13 1.500v5.500h5.500" fill="#c8dcf4" stroke="#3a62b8"/><circle cx="10" cy="14" r="5.500" fill="#4a8ae0"/><path d="M6 11c3-3 7-1 8 1-2 1-3 4-5 6-1-3-4-4-3-7z" fill="#2a9a3a"/></svg>
<svg width="22" height="22"><use href="#clk"/></svg>
<svg width="24" height="24"><path d="M2 1h8v22H2z" fill="url(#rain)"/><use href="#wand"/></svg>
<svg width="24" height="24"><path d="M2 2h6v17H2z" fill="#3a8ad8"/><path d="M3 5h4M3 9h4M3 13h4" stroke="#a8d0f4"/><path d="M9 7h14l-5 4h-6M14 14h6" fill="none" stroke="#3a6ac8" stroke-width="1.400"/><path d="M1 20.500h9" stroke="#e8c020" stroke-width="2.500" stroke-dasharray="2 1.500"/><use href="#wand"/></svg>
<svg width="24" height="24"><path d="M11 5c3-4 6-3 10-2v3l-6-1-5 12" fill="none" stroke="#555" stroke-width="1.800"/><path d="M6 9l2 5 7 7" stroke="#6f7a90" stroke-width="3" fill="none"/><path d="M4 9l2 3 3-1V7" stroke="#6f7a90" stroke-width="1.500" fill="none"/><circle cx="6" cy="20" r="3" fill="#f08a28"/></svg>
</aside>

<aside class="panel">
<div class="ptitle d-flex align-items-center justify-content-between"><span>Part Navigator</span><svg width="15" height="14"><path d="M1 1h13v12H1z" fill="none" stroke="#111" stroke-width="1.400"/><path d="M1 1.500h13" stroke="#111"/></svg></div>
<div class="tree">
<div class="thead-row"><div class="d-flex align-items-center">Name<svg width="12" height="6" class="ms-3"><path d="M1 6h11L6.500 0z" fill="#111"/></svg></div><div>Up to Date</div><div>Comm</div></div>
<div class="rows">
<div class="trow"><div><svg width="19" height="24" fill="none" stroke="#999" stroke-dasharray="1 1.500"><path d="M9.500 12v12M9.500 12.500H18"/></svg><svg width="16" height="16"><use href="#clk"/></svg><span>History Mode</span></div></div>
<div class="trow"><div><svg width="19" height="24" fill="none"><path d="M9.500 0v24M15 12.500h4" stroke="#999" stroke-dasharray="1 1.500"/><path d="M4.500 7.500h10v10h-10z" fill="#fff" stroke="#c8c8c8"/><path d="M9.500 9v7M6 12.500h7" stroke="#111" stroke-width="1.200"/></svg><svg width="16" height="16" fill="none" stroke="#1a9a5a" stroke-width="1.100"><path d="M1 3l6-2 6 2v8l-6 3-6-3zM1 3l6 2 6-2M7 1v13M1 11l6-3 6 3"/><path d="M9 13l6-1" stroke="#e0402a" stroke-width="2"/></svg><span>Model Views</span></div></div>
<div class="trow"><div><svg width="19" height="24" fill="none"><path d="M9.500 0v24M15 12.500h4" stroke="#999" stroke-dasharray="1 1.500"/><path d="M4.500 7.500h10v10h-10z" fill="#fff" stroke="#c8c8c8"/><path d="M9.500 9v7M6 12.500h7" stroke="#111" stroke-width="1.200"/></svg><svg width="12" height="12" class="cam"><use href="#tick"/></svg><svg width="15" height="15"><path d="M1 4l9-3 3 3v8l-9 2-3-1z" fill="#f8e4e0" stroke="#d8402a" stroke-width="1.400"/><circle cx="7" cy="7" r="3.500" fill="#4060b0" stroke="#223"/><path d="M12 6v6" stroke="#222" stroke-width="2"/></svg><span>Cameras</span></div></div>
<div class="trow"><div><svg width="19" height="24" fill="none" stroke="#999" stroke-dasharray="1 1.500"><path d="M9.500 0v24M9.500 12.500H18"/></svg><svg width="16" height="16"><use href="#fold"/><path d="M9 0h6M9 2.500h6" stroke="#1a2a9a" stroke-width="1.200"/></svg><span>User Expressions</span></div></div>
<div class="trow"><div><svg width="19" height="24" fill="none"><path d="M9.500 0v7M15 12.500h4" stroke="#999" stroke-dasharray="1 1.500"/><path d="M4.500 7.500h10v10h-10z" fill="#fff" stroke="#c8c8c8"/><path d="M6 12.500h7" stroke="#111" stroke-width="1.200"/></svg><svg width="16" height="16"><use href="#fold"/></svg><span>Model History</span></div></div>
<div class="trow"><div><svg width="40" height="24" fill="none" stroke="#999" stroke-dasharray="1 1.500"><path d="M28.500 0v24M28.500 12.500H38"/></svg><svg width="12" height="12"><use href="#box"/></svg><svg width="15" height="16" class="kid" fill="none" stroke="#333"><path d="M1 1v10l11 4M1 3l8 3v7M4 7l10-3M1 8l10 3" stroke-width="1.200"/><path d="M11 5l4-1" stroke="#2a9a3a" stroke-width="2"/><path d="M9 14l4 2" stroke="#d22" stroke-width="2"/></svg><span>Datum Coordina...</span></div><svg width="12" height="12"><use href="#tick"/></svg></div>
<div class="trow"><div><svg width="40" height="24" fill="none" stroke="#999" stroke-dasharray="1 1.500"><path d="M28.500 0v12M28.500 12.500H38"/></svg><svg width="12" height="12"><use href="#box"/></svg><svg width="15" height="14" class="kid" fill="none" stroke="#222" stroke-width="1.300"><path d="M1 1h4v4H1zM1 8h4v5H1zM7 8h6v5H7z"/><path d="M8 7l4-5" stroke="#e0a030" stroke-width="2.400"/></svg><span class="fw-bold sk">Sketch (1) "SKE...</span></div><svg width="12" height="12"><use href="#tick"/></svg></div>
</div>
<div class="hscroll"><div class="thumb"></div></div>
</div>
<div class="split"></div>
<div class="sec d-flex align-items-center justify-content-between"><span>Dependencies</span><svg width="14" height="11"><path d="M0 0h3.500L7 6.500 10.500 0H14L8 11H6z" fill="#006487"/></svg></div>
<div class="sec d-flex align-items-center justify-content-between"><span>Details</span><svg width="14" height="11"><path d="M0 0h3.500L7 6.500 10.500 0H14L8 11H6z" fill="#006487"/></svg></div>
<div class="sec d-flex align-items-center justify-content-between"><span>Preview</span><svg width="14" height="11"><path d="M0 0h3.500L7 6.500 10.500 0H14L8 11H6z" fill="#006487"/></svg></div>
</aside>

<section class="view flex-grow-1">
<svg width="1521" height="798" viewBox="399 170 1521 798" fill="none" stroke="#3f5fff" stroke-width="2" stroke-linejoin="round">
<path d="M748.500 466.500L747.800 285.700 929 285l.7 135.600 176.500-.7-.7-135.600 180.800-.8.8 180.500"/>
<path d="M797.700 326l90.300-.7.700 90.700-90.300.4zM1146.900 324l90.200-.6 1.100 90.900-90.600.5z"/>
<g transform="translate(640 460) scale(.33333)" stroke-width="5.500">
<path d="M872 18L895 92 904 165 899 240 881 313 850 379 805 443 751 493 689 535 621 564 549 580 470 582 400 571 333 562 275 568 214 588 163 621 117 666 84 718 65 775 60 838 67 901 90 960 124 1008 173 1054 225 1084 285 1101 348 1104 411 1092 465 1068 593 1003 720 955 854 918 996 894 1138 887 1278 893 1415 914 1554 950 1688 1000 1808 1061 1868 1086 1932 1097 1994 1093 2054 1075 2105 1045 2154 999 2186 951 2209 892 2216 828 2210 768 2189 709 2156 655 2112 612 2059 580 2000 561 1937 555 1870 565 1800 577 1722 574 1651 559 1584 531 1520 490 1465 437 1420 376 1389 309 1370 237 1366 165 1374 90 1396 18"/>
<path d="M998 18L1001 695 1006 738 1022 774 1053 808 1092 829 1138 836 1182 828 1219 807 1251 773 1268 737 1273 688 1270 16"/>
<path id="eye" d="M329 698L374 704 411 725 441 755 460 795 466 832 459 874 439 913 411 941 375 962 332 968 288 962 250 942 220 912 201 877 194 835 201 794 220 755 251 724 289 704z"/>
<use href="#eye" x="1614" y="-7"/>
</g>
<path d="M744 396h9M745 642.500h9M749.500 638v9" stroke-width="1.300" stroke="#4f6ffa"/>
<path d="M747 466.600L933 465.900M939 465.900h12M955 465.800h4M963 465.800h4M972 465.700L1287.500 464.300" stroke="#80744a" stroke-width="2"/>
<path d="M760 466.500L930 465.900M982 465.600L1080 465.200M1110 465L1286 464.300" stroke-width="1.600" stroke-dasharray="5 5 4 7 5 14"/>
<g stroke="#a06c6c" stroke-width="1.200"><path d="M1017.800 465V398M1017.800 423.300h42.200V465h-42.200h68"/><path d="M1017.800 383.500l3.300 15h-6.600zM1100 465.300l-15-3.300v6.600z" fill="#9a6060" stroke="none"/><path d="M1014.800 371.500l3 4.500 3-4.500M1017.800 376v4.500M1104 460.500l6.500 10M1110.500 460.500l-6.500 10M1014.500 461.500h6.500l-6.500 9h6.500"/><circle cx="1017.800" cy="465.500" r="2.700" fill="#5a3030" stroke="none"/></g>
<g stroke="none"><path d="M462.500 876.500h26V902h-26z" fill="#d2d3d4" stroke="#b8b9ba" stroke-width="1.300"/><path d="M462 902v-32" stroke="#2a8a2a" stroke-width="2.200"/><path d="M462 860l3.300 11h-6.600z" fill="#2a8a2a"/><path d="M462 902.500h28" stroke="#8a2020" stroke-width="1.800"/><path d="M506 902.300l-17-3.300v6.600z" fill="#e03434"/><path d="M459 899h6.500v7.500H459z" fill="#1238d8"/><path d="M459 849.500l3 4 3-4M462 853.500v5" stroke="#3a9a3a" stroke-width="1.200"/><path d="M508 898l6.500 9M514.500 898l-6.500 9" stroke="#d84040" stroke-width="1.200"/></g>
</svg>
</section>
</main>
<script src="https://cdn.jsdelivr.net/npm/bootstrap@5.3.0/dist/js/bootstrap.bundle.min.js"></script>
</body>
</html>
